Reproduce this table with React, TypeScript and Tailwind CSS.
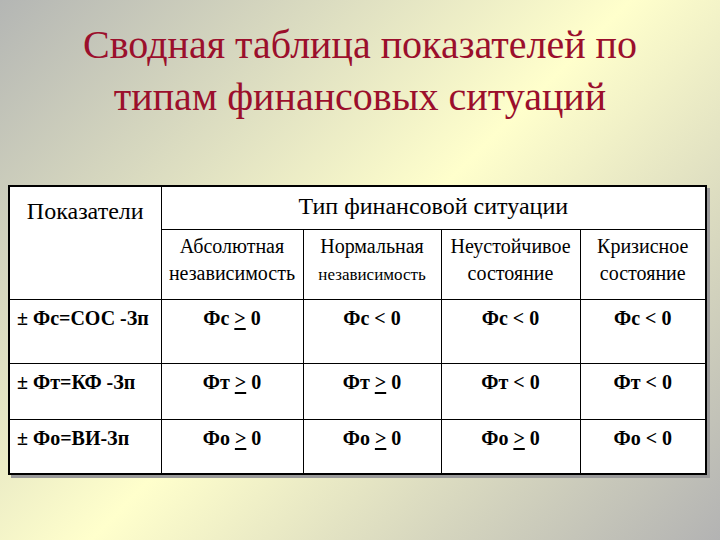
export default function App() {
  const rows = [
    { label: '± Фс=СОС -Зп', cells: ['Фс', 'Фс', 'Фс', 'Фс'], ops: ['ge', 'lt', 'lt', 'lt'], h: 'h-[64px]' },
    { label: '± Фт=КФ -Зп', cells: ['Фт', 'Фт', 'Фт', 'Фт'], ops: ['ge', 'ge', 'lt', 'lt'], h: 'h-[56px]' },
    { label: '± Фо=ВИ-Зп', cells: ['Фо', 'Фо', 'Фо', 'Фо'], ops: ['ge', 'ge', 'ge', 'lt'], h: 'h-[55px]' },
  ];

  return (
    <div className="w-[720px] h-[540px] overflow-hidden font-['Liberation_Serif'] bg-[linear-gradient(135deg,#b4b6b4_0%,#ffffcc_50%,#b3b3b3_100%)]">
      {/* Title */}
      <h1 className="pt-[19px] text-center font-['Liberation_Serif'] text-[40px] leading-[52px] text-[#9b0f2c]">
        Сводная таблица показателей по
        <br />
        типам финансовых ситуаций
      </h1>

      {/* Table */}
      <div className="ml-[8px] mt-[62px] w-[699px] shadow-[3px_3px_0_#9a9a9a]">
        <table className="w-full table-fixed border-collapse border-2 border-black bg-white font-['Liberation_Serif'] text-black">
          <colgroup>
            <col className="w-[152px]" />
            <col className="w-[142px]" />
            <col className="w-[138px]" />
            <col className="w-[139px]" />
            <col />
          </colgroup>
          <thead>
            <tr className="h-[43px]">
              <th rowSpan={2} className="border border-black align-top pt-[12px] text-[24px] font-normal leading-[24px]">
                Показатели
              </th>
              <th colSpan={4} className="border border-black text-[24px] font-normal leading-[24px] pb-[4px]">
                Тип финансовой ситуации
              </th>
            </tr>
            <tr className="h-[70px]">
              <th className="border border-black pb-[8px] font-normal text-[20px] leading-[27px] whitespace-nowrap">
                Абсолютная
                <br />
                независимость
              </th>
              <th className="border border-black pb-[8px] font-normal text-[20px] leading-[27px] whitespace-nowrap">
                Нормальная
                <br />
                <span className="text-[17px]">независимость</span>
              </th>
              <th className="border border-black pb-[8px] font-normal text-[20px] leading-[27px] whitespace-nowrap">
                Неустойчивое
                <br />
                состояние
              </th>
              <th className="border border-black pb-[8px] font-normal text-[20px] leading-[27px] whitespace-nowrap">
                Кризисное
                <br />
                состояние
              </th>
            </tr>
          </thead>
          <tbody>
            {rows.map((r) => (
              <tr key={r.label} className={r.h}>
                <td className="border border-black align-top pt-[6px] pl-[7px] text-[20px] font-bold leading-[24px] whitespace-nowrap">
                  {r.label}
                </td>
                {r.cells.map((c, i) => (
                  <td key={i} className="border border-black align-top pt-[6px] text-center text-[20px] font-bold leading-[24px]">
                    {c}{' '}
                    {r.ops[i] === 'ge' ? <span className="underline decoration-2 underline-offset-[3px]">&gt;</span> : <span>&lt;</span>} 0
                  </td>
                ))}
              </tr>
            ))}
          </tbody>
        </table>
      </div>
    </div>
  );
}
